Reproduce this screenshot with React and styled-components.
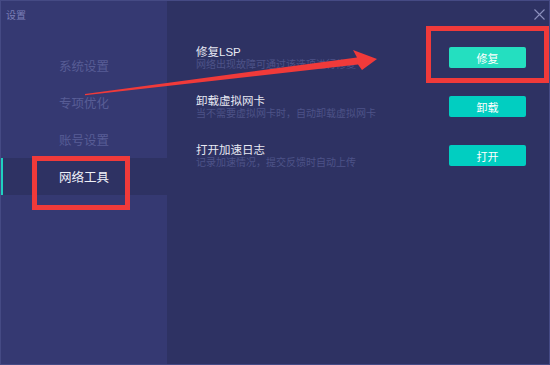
import React from "react";
import styled, { createGlobalStyle } from "styled-components";

const GlobalStyle = createGlobalStyle`
  html, body {
    margin: 0;
    padding: 0;
    background: #2e3263;
  }
  body {
    font-family: "Noto Sans CJK SC", "Noto Sans", sans-serif;
  }
`;

const menu = ["系统设置", "专项优化", "账号设置", "网络工具"];

const tools = [
  { title: "修复LSP", desc: "网络出现故障可通过该选项进行修复", action: "修复", hover: true },
  { title: "卸载虚拟网卡", desc: "当不需要虚拟网卡时，自动卸载虚拟网卡", action: "卸载" },
  { title: "打开加速日志", desc: "记录加速情况，提交反馈时自动上传", action: "打开" },
];

const App = () => {
  return (
    <>
      <GlobalStyle />
      <Window>
        <Sidebar>
          <Caption>设置</Caption>
          <Menu>
            {menu.map((item, i) => (
              <MenuItem key={item} $active={i === menu.length - 1}>
                {item}
              </MenuItem>
            ))}
          </Menu>
        </Sidebar>
        <Main>
          <Close aria-label="close">
            <svg width="11" height="11" viewBox="0 0 11 11">
              <path d="M0.5 0.5L10.5 10.5M10.5 0.5L0.5 10.5" stroke="#8c90bd" strokeWidth="1.1" />
            </svg>
          </Close>
          {tools.map((t) => (
            <ToolRow key={t.title}>
              <ToolText>
                <ToolTitle>{t.title}</ToolTitle>
                <ToolDesc>{t.desc}</ToolDesc>
              </ToolText>
              <ActionButton $hover={t.hover}>{t.action}</ActionButton>
            </ToolRow>
          ))}
        </Main>

        {/* annotation overlays */}
        <Marker $x={31} $y={155} $w={98} $h={54} />
        <Marker $x={425} $y={25} $w={123} $h={57} />
        <Arrow width="550" height="365" viewBox="0 0 550 365">
          <polygon
            points="85,94 357,57.5 353,50 377,59 362,70 358,64.5 85,95.2"
            fill="#f03a3a"
          />
        </Arrow>
      </Window>
    </>
  );
};

export default App;

const Window = styled.div`
  position: relative;
  display: flex;
  width: 550px;
  height: 365px;
  box-sizing: border-box;
  border: 1px solid #454a84;
  background: #2e3263;
  overflow: hidden;
`;

const Sidebar = styled.div`
  width: 166px;
  flex-shrink: 0;
  background: #353972;
  display: flex;
  flex-direction: column;
`;

const Caption = styled.div`
  padding: 7px 0 0 5px;
  height: 39px;
  box-sizing: border-box;
  font-size: 10px;
  line-height: 14px;
  color: #7b7fb6;
`;

const Menu = styled.div`
  display: flex;
  flex-direction: column;
  padding-top: 7px;
`;

const MenuItem = styled.div`
  height: 37px;
  display: flex;
  align-items: center;
  justify-content: center;
  font-size: 12.5px;
  color: ${(p) => (p.$active ? "#eef0f8" : "#585d96")};
  background: ${(p) => (p.$active ? "#2e3263" : "transparent")};
  box-shadow: ${(p) => (p.$active ? "inset 2px 0 0 #1fd0c0" : "none")};
`;

const Main = styled.div`
  position: relative;
  flex: 1;
  padding: 32px 23px 0 29px;
  display: flex;
  flex-direction: column;
`;

const Close = styled.div`
  position: absolute;
  top: 8px;
  right: 4px;
  width: 11px;
  height: 11px;
  display: flex;
`;

const ToolRow = styled.div`
  height: 49px;
  display: flex;
  align-items: center;
  justify-content: space-between;
`;

const ToolText = styled.div`
  display: flex;
  flex-direction: column;
  font-family: "Liberation Sans", "Noto Sans CJK SC", sans-serif;
`;

const ToolTitle = styled.div`
  font-size: 11.5px;
  line-height: 14px;
  color: #e8e9f3;
`;

const ToolDesc = styled.div`
  font-size: 10px;
  line-height: 12px;
  color: #4d5288;
`;

const ActionButton = styled.button`
  width: 77px;
  height: 21px;
  border: none;
  border-radius: 2px;
  background: ${(p) => (p.$hover ? "#24dfc0" : "#01cec1")};
  color: #ffffff;
  font-family: inherit;
  font-size: 11px;
  padding: 0;
  cursor: pointer;
`;

const Marker = styled.div`
  position: absolute;
  left: ${(p) => p.$x}px;
  top: ${(p) => p.$y}px;
  width: ${(p) => p.$w}px;
  height: ${(p) => p.$h}px;
  box-sizing: border-box;
  border: 5px solid #f03a3a;
  pointer-events: none;
`;

const Arrow = styled.svg`
  position: absolute;
  left: -1px;
  top: -1px;
  pointer-events: none;
`;
